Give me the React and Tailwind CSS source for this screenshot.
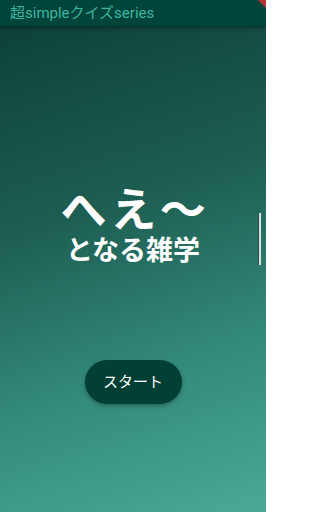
import React from 'react';

const jp = { fontFamily: 'Roboto, "Noto Sans CJK JP", sans-serif' };

export default function App() {
  return (
    <div className="relative w-[266px] h-[512px] overflow-hidden bg-[linear-gradient(162deg,#0b3d35_0%,#1d5e52_40%,#338a7a_70%,#4aa995_100%)]" style={jp}>
      <div className="relative z-10 h-[26px] bg-[#00443a] shadow-[0_2px_4px_rgba(0,0,0,0.35)] flex items-center px-[10px]">
        <span className="text-[15px] leading-none text-[#3db5a2]">超simpleクイズseries</span>
      </div>
      <div className="absolute top-0 right-0 z-20 w-[8px] h-[8px] bg-[#b8322f] [clip-path:polygon(0_0,100%_0,100%_100%)]" />

      <div className="flex flex-col items-center pt-[161px]">
        <div className="text-white font-bold text-[46px] leading-none tracking-[0.08em] ml-[4px]">へえ〜</div>
        <div className="text-white font-bold text-[27px] leading-none mt-[5px]">となる雑学</div>
        <button className="mt-[95px] w-[97px] h-[44px] rounded-full bg-[#023f34] text-white text-[15px] shadow-[0_2px_4px_rgba(0,0,0,0.3)]">
          スタート
        </button>
      </div>

      <div className="absolute right-[5px] top-[213px] w-[3px] h-[52px] bg-[#d6e2de] border-l border-[#2b4f48]" />
    </div>
  );
}
